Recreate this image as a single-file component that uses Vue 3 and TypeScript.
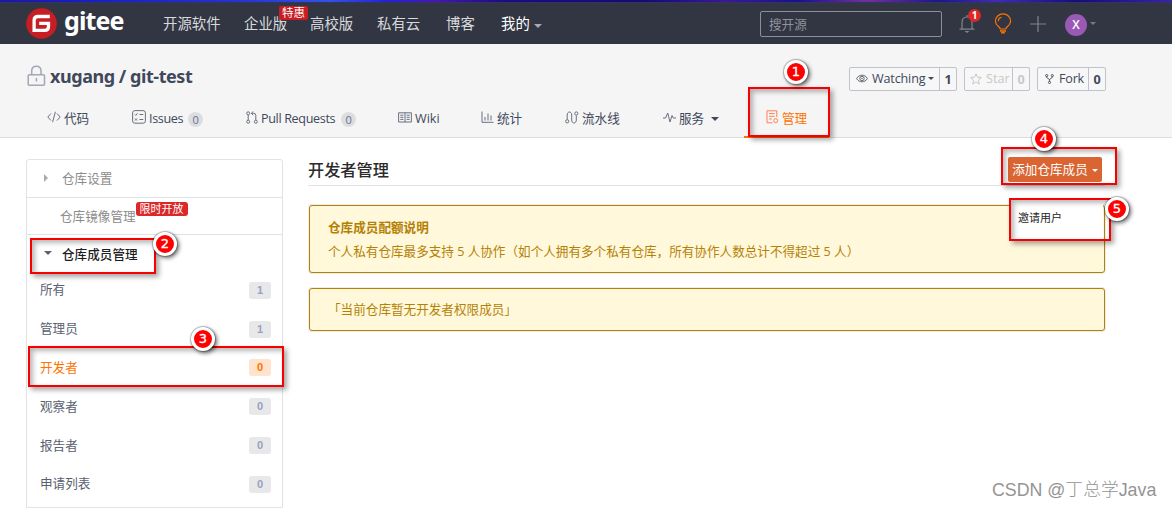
<script setup lang="ts">
interface NavItem { text: string; width: number; badge?: string; active?: boolean }
interface Tab { key: string; text: string; width: number; count?: number; caret?: boolean }
interface Member { text: string; count: number; active?: boolean }

const nav: NavItem[] = [
  { text: '开源软件', width: 81 },
  { text: '企业版', width: 66, badge: '特惠' },
  { text: '高校版', width: 67 },
  { text: '私有云', width: 69 },
  { text: '博客', width: 55 },
  { text: '我的', width: 60, active: true },
]
const tabs: Tab[] = [
  { key: 'code', text: '代码', width: 85 },
  { key: 'issues', text: 'Issues', width: 114, count: 0 },
  { key: 'pr', text: 'Pull Requests', width: 152, count: 0 },
  { key: 'wiki', text: 'Wiki', width: 83 },
  { key: 'stat', text: '统计', width: 84 },
  { key: 'pipe', text: '流水线', width: 98 },
  { key: 'service', text: '服务', width: 81, caret: true },
  { key: 'manage', text: '管理', width: 85 },
]
const members: Member[] = [
  { text: '所有', count: 1 },
  { text: '管理员', count: 1 },
  { text: '开发者', count: 0, active: true },
  { text: '观察者', count: 0 },
  { text: '报告者', count: 0 },
  { text: '申请列表', count: 0 },
]
const frames = ['f1', 'f2', 'f3', 'f4', 'f5']
</script>

<template>
  <div class="page">
    <header class="top">
      <div class="strip"></div>
      <div class="topbar">
        <div class="logo">
          <svg width="31" height="31" viewBox="0 0 31 31">
            <circle cx="15.5" cy="15.5" r="15.3" fill="#c71d23" />
            <path d="M23.8 8.500H12Q8.100 8.500 8.100 12.400V22.400H18.600Q22.500 22.400 22.500 18.500V15.400H13.200" fill="none" stroke="#fff" stroke-width="3.300" />
          </svg>
          <span class="brand">gitee</span>
        </div>
        <nav class="nav">
          <a v-for="n in nav" :key="n.text" :class="{ on: n.active }" :style="{ width: n.width + 'px' }">
            {{ n.text }}<i v-if="n.active" class="caret"></i>
            <span v-if="n.badge" class="promo">{{ n.badge }}</span>
          </a>
        </nav>
        <div class="search">搜开源</div>
        <div class="bell">
          <svg width="16" height="19" viewBox="0 0 16 19" fill="none" stroke="#80848d" stroke-width="1.2">
            <path d="M.5 15.200H15.500M3 15V8.500C3 5 5 3 8 3S13 5 13 8.500V15M8 3V1" /><path d="M5.500 17H10.500L8 19Z" fill="#80848d" stroke="none" />
          </svg>
          <b>1</b>
        </div>
        <svg class="bulb" width="18" height="21" viewBox="0 0 18 21" fill="none" stroke="#fe7300" stroke-width="1.2">
          <path d="M6.300 16C6.300 13.500 1.400 13 1.400 8.200A7.600 7.300 0 0 1 16.600 8.200C16.600 13 11.700 13.500 11.700 16ZM4.300 8.300C4.300 6 5.500 4.600 7.500 4.300" />
          <path d="M6 18H12M7.200 19.700H10.800" stroke-width="1.500" />
        </svg>
        <svg class="plus" width="16" height="16" viewBox="0 0 16 16" stroke="#80848d" stroke-width="1.2"><path d="M8 0V16M0 8H16" /></svg>
        <div class="avatar">X</div>
        <i class="caret small"></i>
      </div>
    </header>

    <section class="repo">
      <div class="repo-head">
        <svg width="19" height="22" viewBox="0 0 19 22" fill="none" stroke="#a3a7b6" stroke-width="1.500">
          <rect x="1.200" y="9.700" width="16.300" height="10.600" rx="1" /><path d="M4.700 9.500V6C4.700 3 6.500 1.200 9.400 1.200S14 3 14 6V9.500M9.400 13V16.500" />
        </svg>
        <h1>xugang / git-test</h1>
        <div class="actions">
          <div class="btn watch">
            <span class="lab">
              <svg width="12" height="9" viewBox="0 0 12 9" fill="none" stroke="#40485b"><path d="M.6 4.500C3 .1 9 .1 11.400 4.500C9 8.900 3 8.900 .6 4.500Z" stroke-width=".8" /><circle cx="6" cy="4.500" r="2.200" stroke-width=".8" /><circle cx="6" cy="4.500" r=".5" stroke-width=".6" /></svg>
              <span>Watching</span><i class="caret dark"></i>
            </span><b>1</b>
          </div>
          <div class="btn star">
            <span class="lab">
              <svg width="12" height="12" viewBox="0 0 12 12" fill="none" stroke="#c8c8c8"><path d="M6 .8L7.500 4.200L11.400 4.600L8.500 7.100L9.300 11L6 9L2.700 11L3.500 7.100L.6 4.600L4.500 4.200Z" /></svg>
              <span>Star</span>
            </span><b>0</b>
          </div>
          <div class="btn fork">
            <span class="lab">
              <svg width="9" height="10" viewBox="0 0 9 10" fill="none" stroke="#40485b" stroke-width=".9"><circle cx="1.700" cy="1.600" r="1.100" /><circle cx="7.300" cy="1.600" r="1.100" /><circle cx="4.500" cy="8.400" r="1.100" /><path d="M1.700 2.700V3.500L4.500 5.500L7.300 3.500V2.700M4.500 5.500V7.300" /></svg>
              <span>Fork</span>
            </span><b>0</b>
          </div>
        </div>
      </div>
      <div class="tabs">
        <a v-for="t in tabs" :key="t.key" :class="['tab', t.key]" :style="{ width: t.width + 'px' }">
          <svg v-if="t.key === 'code'" width="14" height="12" viewBox="0 0 14 12"><path d="M4 2.500L.8 6L4 9.500M10 2.500L13.200 6L10 9.500M8.400 .8L5.600 11.200" /></svg>
          <svg v-else-if="t.key === 'issues'" width="14" height="14" viewBox="0 0 14 14"><rect x=".6" y=".6" width="12.800" height="12.600" rx="2.300" /><path d="M2.800 4.300L3.800 5.300L5.600 3.300M7.500 4.500H11.300M3 8.500L5 10.500M5 8.500L3 10.500M7.500 9.500H11.300" /></svg>
          <svg v-else-if="t.key === 'pr'" width="12" height="13" viewBox="0 0 12 13"><circle cx="2.200" cy="2.300" r="1.500" /><circle cx="2.200" cy="10.700" r="1.500" /><circle cx="9.800" cy="10.700" r="1.500" /><path d="M2.200 4V9M9.800 9V4.300Q9.800 2.300 7.800 2.300H5.500M7.300 .4L5.300 2.300L7.300 4.200" /></svg>
          <svg v-else-if="t.key === 'wiki'" width="14" height="11" viewBox="0 0 14 11"><path d="M.6 .8H13.400V10H.6ZM7 .8V10M2.300 3.200H5.400M2.300 5.300H5.400M2.300 7.400H5.400M8.600 3.200H11.700M8.600 5.300H11.700M8.600 7.400H11.700" /></svg>
          <svg v-else-if="t.key === 'stat'" width="13" height="12" viewBox="0 0 13 12"><path d="M1 .5V11.300H12.500M4 9.500V6M7 9.500V2.500M10 9.500V4.500" /></svg>
          <svg v-else-if="t.key === 'pipe'" width="14" height="13" viewBox="0 0 14 13"><path d="M2.200 8.500V4C2.200 0 6.700 0 6.700 4V9C6.700 13 11.300 13 11.300 9V4.500" /><circle cx="2.200" cy="10.300" r="1.600" /><circle cx="11.300" cy="2.500" r="1.600" /></svg>
          <svg v-else-if="t.key === 'service'" width="13" height="11" viewBox="0 0 13 11"><path d="M0 6H2.600L4.700 1L7 10L9 3.500L10.300 6H13" /></svg>
          <svg v-else width="13" height="14" viewBox="0 0 13 14"><path d="M6.500 12.800H1V.8H10.800V7M3 3.600H8.700M3 6.300H8.700M3 9H5.800" /><circle cx="9.700" cy="10.700" r="2" /></svg>
          <span class="tt">{{ t.text }}</span>
          <em v-if="t.count !== undefined">{{ t.count }}</em>
          <i v-if="t.caret" class="caret big"></i>
        </a>
      </div>
    </section>

    <div class="body">
      <aside>
        <div class="group"><i class="tri"></i><span>仓库设置</span></div>
        <div class="group mirror"><span>仓库镜像管理</span><b>限时开放</b></div>
        <div class="group open"><i class="caret big"></i><span>仓库成员管理</span></div>
        <div v-for="m in members" :key="m.text" :class="['member', { on: m.active }]">
          <span>{{ m.text }}</span><b>{{ m.count }}</b>
        </div>
      </aside>
      <main>
        <div class="heading">
          <h2>开发者管理</h2>
          <button>添加仓库成员<i class="caret"></i></button>
          <div class="menu">邀请用户</div>
        </div>
        <div class="notice quota">
          <strong>仓库成员配额说明</strong>
          <p>个人私有仓库最多支持 5 人协作（如个人拥有多个私有仓库，所有协作人数总计不得超过 5 人）</p>
        </div>
        <div class="notice empty">「当前仓库暂无开发者权限成员」</div>
      </main>
    </div>

    <div v-for="(f, i) in frames" :key="f" :class="['mark', f]"><span>{{ i + 1 }}</span></div>
    <div class="watermark">CSDN @丁总学Java</div>
  </div>
</template>

<style>
body { margin: 0; background: #fff; }
</style>
<style scoped>
* { box-sizing: border-box; }
.page { position: relative; width: 1172px; height: 508px; overflow: hidden; background: #fff; color: #40485b; font: 12.6px/18px "Open Sans", "Noto Sans CJK SC", sans-serif; white-space: nowrap; }
svg { display: block; flex: none; }
.caret { display: inline-block; flex: none; border: 4px solid transparent; border-top-color: currentColor; border-bottom: 0; margin-left: 4px; }
.top { height: 44px; background: #323643; }
.strip { height: 3px; border-bottom: 1px solid #30346a; background: linear-gradient(90deg, #1c18a0, #1920c0 8%, #2432ce 20%, #3452e4 28%, #2424d0 33%, #4a16b0 37%, #1c0c80 43%, #140b72 55%, #3d1894 62%, #18108d 68%, #74309a 74%, #1d1688 80%, #412bb5 85%, #170c78 92%, #3a22a7); }
.topbar { display: flex; height: 41px; align-items: center; padding-left: 26px; }
.logo { display: flex; width: 137px; align-items: center; margin-top: -1px; gap: 7px; }
.brand { color: #fff; font: 700 25px/30px "Noto Sans", sans-serif; margin-top: -6px; letter-spacing: -.9px; }
.nav { display: flex; width: 597px; font-size: 14.400px; color: #d8d9dc; }
.nav a { position: relative; flex: none; }
.nav .on { color: #fff; }
.nav .caret { color: #a6a9b0; vertical-align: 1px; margin-left: 4px; }
.promo { position: absolute; left: 35px; top: -9px; width: 29px; height: 14px; border-radius: 2px; background: #c71d23; color: #fff; font-size: 11.500px; line-height: 13px; text-align: center; }
.search { width: 182px; height: 26px; border: 1px solid #8c909b; border-radius: 2px; padding-left: 8px; line-height: 25px; color: #8f929a; }
.bell { position: relative; width: 16px; margin: 0 0 0 17px; }
.bell b { position: absolute; left: 9px; top: -5px; width: 13px; height: 13px; border-radius: 50%; background: #db2828; color: #fff; font-size: 10px; line-height: 13px; text-align: center; }
.bulb { margin-left: 19px; }
.plus { margin-left: 18px; }
.avatar { width: 22px; height: 22px; margin: 2px 0 0 19px; border-radius: 50%; background: #9b59b6; color: #fff; font-size: 12px; line-height: 22px; text-align: center; font-weight: 600; }
.small { color: #777b85; border-width: 3px; border-bottom: 0; margin: -1px 0 0 3px; }
.repo { height: 94px; background: #f5f5f5; border-bottom: 1px solid #dcddde; }
.repo-head { display: flex; height: 55px; padding: 8px 66px 0 27px; align-items: center; }
h1 { margin: 0 0 0 4px; font: 700 18px/24px "Noto Sans", sans-serif; letter-spacing: -.45px; }
.actions { display: flex; margin-left: auto; gap: 7px; margin-top: 6px; }
.btn { display: flex; height: 24px; border: 1px solid #c0c3cd; border-radius: 2px; line-height: 23px; background: #f7f7f7; }
.lab { display: flex; flex: 1; align-items: center; padding-left: 6px; gap: 4px; }
.watch .lab { letter-spacing: -.15px; }
.lab .caret { border-width: 3px; border-bottom: 0; margin-left: 0; }
.watch .lab .caret { margin-left: -1px; }
.btn b { border-left: 1px solid #c0c3cd; width: 17px; text-align: center; }
.watch { width: 108px; }
.star { width: 66px; color: #c8c8c8; }
.star .lab { padding-left: 5px; }
.fork { width: 69px; }
.fork .lab { gap: 5px; padding-left: 7px; letter-spacing: -.2px; }
.tabs { display: flex; height: 39px; padding-left: 47px; }
.tab { display: flex; flex: none; height: 38px; align-items: center; padding-top: 1px; }
.tab svg { fill: none; stroke: #626879; stroke-width: .95; margin-right: 3px; margin-top: -3px; }
.tab em { width: 15px; height: 15px; margin-left: 5px; margin-top: 1px; border-radius: 50%; background: #dcdde1; color: #667390; font: 11px/15px "Open Sans", sans-serif; text-align: center; }
.issues .tt, .pr .tt { letter-spacing: -.35px; }
.tab.pr em { margin-left: 6px; }
.tab .big { margin-left: 7px; }
.tab.manage { padding-left: 22px; color: #fe7300; border-bottom: 2px solid #fe7300; height: 39px; padding-top: 2px; }
.tab.manage svg { stroke: #ff784c; }
.body { display: flex; padding: 21px 0 0 26px; }
aside { width: 257px; height: 349px; border: 1px solid #e1e2e4; border-radius: 3px 3px 0 0; }
.group { position: relative; display: flex; height: 37.500px; align-items: center; padding: 2px 0 0 35px; border-bottom: 1px solid #e1e2e4; color: #8c8c8c; }
.group i { position: absolute; left: 17px; top: 16px; margin: 0; }
.tri { border: 4px solid transparent; border-left-color: #aaa; border-right: 0; top: 14px !important; }
.mirror { padding-left: 33px; }
.mirror b { align-self: flex-start; margin-top: 2px; width: 52px; height: 14px; border-radius: 3px; background: #db2828; color: #fff; font-size: 11px; font-weight: 400; line-height: 14px; text-align: center; }
.open { color: #1d1d1f; border: 0; height: 37px; font-weight: 500; }
.open i { color: #606060; }
.member { display: flex; height: 38.800px; align-items: center; justify-content: space-between; padding: 0 11px 0 13px; color: #59616f; position: relative; top: -1px; }
.member b { width: 22px; height: 17px; border-radius: 3px; background: #e8e8ea; color: #96a2c1; font: 700 11px/17px "Liberation Sans", sans-serif; text-align: center; }
.member.on { color: #fe7300; }
.member.on b { background: #ffe3cc; color: #fe7300; }
main { width: 797px; margin-left: 25px; }
.heading { position: relative; display: flex; height: 27px; align-items: center; justify-content: space-between; border-bottom: 1px solid #e2e3e6; padding-right: 3px; }
h2 { margin: -6px 0 0; color: #2b2b2b; font: 500 16.200px/24px "Noto Sans CJK SC", sans-serif; }
button { width: 94px; height: 25px; margin-top: -5px; border: 0; border-radius: 2px; padding: 0; background: #da6532; color: #fff; font: inherit; line-height: 23px; }
button .caret { border-width: 3px; border-bottom: 0; margin-left: 4px; vertical-align: 2px; }
.menu { position: absolute; z-index: 1; left: 701px; top: 40px; width: 94px; height: 41px; padding-left: 9px; background: #fff; color: #262626; font-size: 11px; line-height: 38px; }
.notice { margin-left: 1px; border: 1px solid #b58105; border-radius: 3px; background: #fff8db; color: #b58105; box-shadow: 0 0 0 1px #ececec; }
.quota { height: 68px; margin-top: 19px; padding: 12px 18px; }
strong { display: block; font-weight: 700; line-height: 20px; }
p { margin: 0; padding-top: 4px; line-height: 20px; }
.empty { height: 43px; margin-top: 15px; padding-left: 18px; line-height: 42px; }
.mark { position: absolute; z-index: 2; border: 2px solid #f60000; box-shadow: 3px 3px 5px rgba(0,0,0,.35), inset 3px 3px 5px rgba(0,0,0,.28); }
.mark span { position: absolute; width: 24px; height: 24px; border: 3px solid #fff; border-radius: 50%; background: #fe0000; box-shadow: 2px 2px 4px rgba(0,0,0,.6), 0 0 1px 1px rgba(0,0,0,.25); color: #fff; font: 13px/18px "DejaVu Sans", sans-serif; -webkit-text-stroke: .3px #fff; text-align: center; }
.f1 { left: 748px; top: 87px; width: 82px; height: 50px; }
.f1 span { left: 34px; top: -29px; }
.f2 { left: 30px; top: 238px; width: 126px; height: 36px; }
.f2 span { left: 121px; top: -8px; }
.f3 { left: 28px; top: 346px; width: 256px; height: 41px; }
.f3 span { left: 161px; top: -21px; }
.f4 { left: 1001px; top: 147px; width: 116px; height: 38px; }
.f4 span { left: 29px; top: -22px; }
.f5 { left: 1009px; top: 198px; width: 102px; height: 43px; }
.f5 span { left: 94px; top: -3px; }
.watermark { position: absolute; left: 992px; top: 478px; color: #949494; font: 300 17.800px/24px "Liberation Sans", "Noto Sans CJK SC", sans-serif; }
</style>
